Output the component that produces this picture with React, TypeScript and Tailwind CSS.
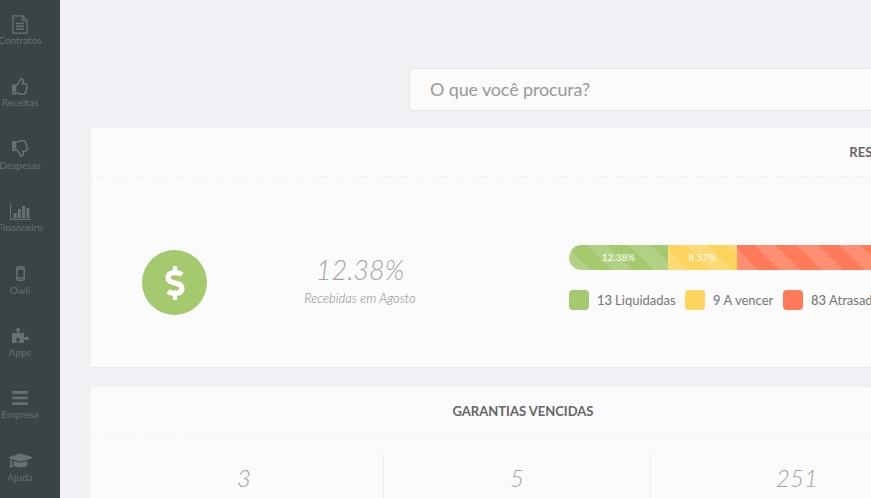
import { FaRegThumbsUp, FaRegThumbsDown, FaPuzzlePiece, FaBars, FaGraduationCap, FaDollarSign } from 'react-icons/fa';

// outlined sheet with folded corner, wider than the package one
const FileIcon = () => (
  <svg width="16" height="19" viewBox="0 0 16 19" fill="none" stroke="currentColor" strokeWidth="1.3">
    <path d="M1 .8h9.5L15 5.3V18.2H1z" />
    <path d="M10.5 .8v4.5H15" />
    <path d="M4 8.5h8M4 11.2h8M4 13.9h8" strokeWidth="1.5" />
  </svg>
);

// bar chart with baseline, the icon set only has the boxed one
const ChartIcon = () => (
  <svg width="21" height="17" viewBox="0 0 21 17" fill="currentColor">
    <path d="M0 0h1.1v15.8H21V17H0z" />
    <rect x="3.5" y="10" width="3" height="5" />
    <rect x="7.8" y="6" width="3" height="9" />
    <rect x="12.1" y="3" width="3" height="12" />
    <rect x="16.4" y="5" width="3" height="10" />
  </svg>
);

const PhoneIcon = () => (
  <svg width="9" height="15" viewBox="0 0 9 15" fill="none" stroke="currentColor" strokeWidth="1.4">
    <rect x=".8" y=".8" width="7.4" height="13.4" rx="1.4" />
    <path d="M.8 2.8h7.4M.8 12h7.4" />
  </svg>
);

const menu = [
  { label: 'Contratos', icon: <FileIcon /> },
  { label: 'Receitas', icon: <FaRegThumbsUp size={17} /> },
  { label: 'Despesas', icon: <FaRegThumbsDown size={17} /> },
  { label: 'Financeiro', icon: <ChartIcon /> },
  { label: 'Owli', icon: <PhoneIcon /> },
  { label: 'Apps', icon: <FaPuzzlePiece size={17} /> },
  { label: 'Empresa', icon: <FaBars size={18} /> },
  { label: 'Ajuda', icon: <FaGraduationCap size={23} /> },
];

const stripes =
  'bg-[repeating-linear-gradient(45deg,rgba(255,255,255,0.15)_0,rgba(255,255,255,0.15)_15px,transparent_15px,transparent_30px)]';

export default function App() {
  return (
    <div className="flex h-[498px] w-[871px] overflow-hidden font-['Lato',sans-serif]">
      <aside className="flex w-[60px] shrink-0 flex-col bg-[#3a4446] pt-[14px] text-[#657274]">
        {menu.map((item) => (
          <div key={item.label} className="flex h-[62.4px] w-[40px] shrink-0 flex-col items-center">
            <div className="flex h-[20px] items-center justify-center">{item.icon}</div>
            <span className="mt-[-1px] text-[10px] leading-[14px] whitespace-nowrap">{item.label}</span>
          </div>
        ))}
      </aside>

      <main className="min-w-0 flex-1 overflow-hidden bg-[conic-gradient(#f4f6f7_25%,#ebedf0_0_50%,#f4f6f7_0_75%,#ebedf0_0)] bg-[length:2px_2px] pt-[68px] pl-[31px]">
        <div className="ml-[318px] flex h-[43px] w-[900px] items-center rounded-[3px] border border-[#e3e6e8] bg-[#fbfbfb] pl-[20px] text-[18px] tracking-[-0.15px] text-[#999999]">
          O que você procura?
        </div>

        <section className="mt-[17px] h-[239px] w-[1572px] bg-[#fbfbfb] shadow-[0_1px_2px_rgba(0,0,0,0.05)]">
          <div className="flex h-[50px] items-center justify-center border-b border-dashed border-[#f0f1f2] pt-[1px] text-[13px] font-bold text-[#666666]">
            RESUMO
          </div>
          <div className="flex pt-[67px]">
            <div className="mt-[5px] ml-[51px] flex h-[65px] w-[65px] shrink-0 items-center justify-center rounded-full bg-[#a5c96f] text-white">
              <FaDollarSign size={34} />
            </div>
            <div className="flex w-[306px] shrink-0 flex-col items-center">
              <span className="mt-[7px] text-[27px] leading-[36px] font-light text-[#a4a4a4] italic">12.38%</span>
              <span className="mt-[2px] text-[13px] leading-[16px] font-light text-[#858585] italic">Recebidas em Agosto</span>
            </div>
            <div className="ml-[56px] w-[800px]">
              <div className="flex h-[25px] overflow-hidden rounded-l-full text-[10px] leading-[25px] text-white">
                <div className={`w-[99px] bg-[#a5c96f] text-center ${stripes}`}>12.38%</div>
                <div className={`w-[69px] bg-[#fdd45e] text-center ${stripes}`}>8.57%</div>
                <div className={`flex-1 bg-[#ff7a59] ${stripes}`} />
              </div>
              <div className="mt-[20px] flex text-[13px] leading-[20px] text-[#777777]">
                <div className="flex w-[116px] items-center">
                  <span className="mr-[8px] h-[20px] w-[20px] rounded-[4px] bg-[#a5c96f]" />
                  <b className="mr-[3px] font-medium">13</b> Liquidadas
                </div>
                <div className="flex w-[98px] items-center">
                  <span className="mr-[8px] h-[20px] w-[20px] rounded-[4px] bg-[#fdd45e]" />
                  <b className="mr-[3px] font-medium">9</b> A vencer
                </div>
                <div className="flex items-center">
                  <span className="mr-[8px] h-[20px] w-[20px] rounded-[4px] bg-[#ff7a59]" />
                  <b className="mr-[3px] font-medium">83</b> Atrasadas
                </div>
              </div>
            </div>
          </div>
        </section>

        <section className="mt-[20px] h-[200px] w-[864px] bg-[#fbfbfb]">
          <div className="flex h-[50px] items-center justify-center border-b border-dashed border-[#f0f1f2] pt-[1px] text-[13px] font-bold text-[#666666]">
            GARANTIAS VENCIDAS
          </div>
          <div className="mt-[16px] flex text-[24px] leading-[50px] font-light text-[#a4a4a4] italic">
            <div className="w-[293px] border-r border-[#eeeeee] pl-[14px] text-center">3</div>
            <div className="w-[267px] border-r border-[#eeeeee] text-center">5</div>
            <div className="w-[292px] text-center">251</div>
          </div>
        </section>
      </main>
    </div>
  );
}
